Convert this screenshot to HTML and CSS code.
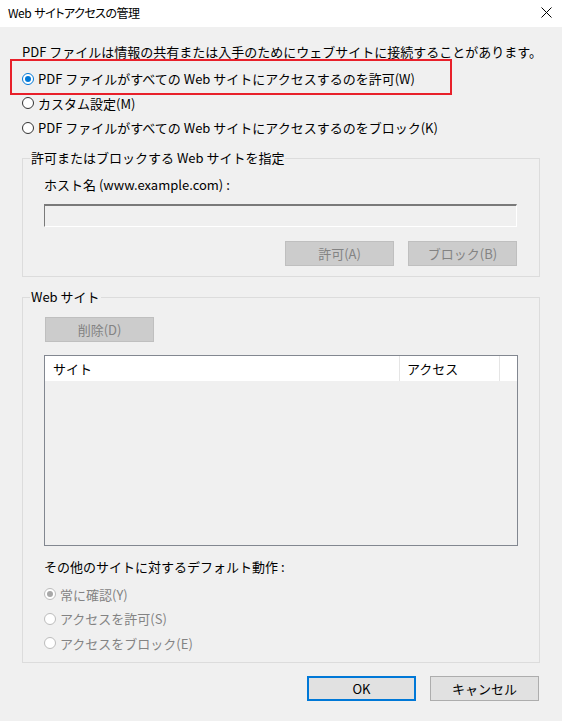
FILE: index.html
```html
<!DOCTYPE html>
<html lang="ja">
<head>
<meta charset="utf-8">
<title>Web サイトアクセスの管理</title>
<link rel="stylesheet" href="styles.css">
</head>
<body>
<div class="dialog">
  <div class="titlebar">
    <span class="title">Web サイトアクセスの管理</span>
    <svg class="close" width="11" height="11" viewBox="0 0 11 11"><path d="M0.5 0.5 L10.5 10.5 M10.5 0.5 L0.5 10.5" stroke="#000" stroke-width="1" fill="none"/></svg>
  </div>
  <div class="main">
    <div class="highlight"></div>
    <p class="intro">PDF ファイルは情報の共有または入手のためにウェブサイトに接続することがあります。</p>
    <div class="options">
      <div class="radio-row"><span class="radio checked"></span><span>PDF ファイルがすべての Web サイトにアクセスするのを許可(W)</span></div>
      <div class="radio-row"><span class="radio"></span><span>カスタム設定(M)</span></div>
      <div class="radio-row"><span class="radio"></span><span>PDF ファイルがすべての Web サイトにアクセスするのをブロック(K)</span></div>
    </div>

    <div class="group group-host">
      <span class="legend">許可またはブロックする Web サイトを指定</span>
      <div class="label">ホスト名 (www.example.com) :</div>
      <div class="textbox"></div>
      <div class="btn-row">
        <span class="btn disabled">許可(A)</span>
        <span class="btn disabled">ブロック(B)</span>
      </div>
    </div>

    <div class="group group-sites">
      <span class="legend">Web サイト</span>
      <span class="btn disabled btn-delete">削除(D)</span>
      <div class="list">
        <div class="list-head">
          <span class="col col-site">サイト</span>
          <span class="col col-access">アクセス</span>
          <span class="col col-rest"></span>
        </div>
      </div>
      <div class="label label-default">その他のサイトに対するデフォルト動作 :</div>
      <div class="default-options">
        <div class="radio-row disabled-row"><span class="radio checked-disabled"></span><span>常に確認(Y)</span></div>
        <div class="radio-row disabled-row"><span class="radio radio-disabled"></span><span>アクセスを許可(S)</span></div>
        <div class="radio-row disabled-row"><span class="radio radio-disabled"></span><span>アクセスをブロック(E)</span></div>
      </div>
    </div>

    <div class="footer">
      <span class="btn btn-ok">OK</span>
      <span class="btn btn-cancel">キャンセル</span>
    </div>
  </div>
</div>
</body>
</html>
```

FILE: styles.css
```css
* { box-sizing: border-box; }
html, body { margin: 0; padding: 0; }
body {
  background: #f0f0f0;
  font-family: "Noto Sans CJK JP", "Noto Sans", sans-serif;
  font-size: 12px;
  color: #000;
}
.dialog {
  width: 562px;
  height: 721px;
  background: #f0f0f0;
  overflow: hidden;
}
.titlebar {
  height: 27px;
  background: #fff;
  display: flex;
  align-items: center;
  justify-content: space-between;
  padding: 0 10px 0 8px;
}
.title {
  font-size: 12px;
  font-feature-settings: "palt";
  letter-spacing: -0.5px;
  word-spacing: 1px;
  line-height: 16px;
  margin-top: -1px;
  white-space: pre;
}
.close { display: block; margin-top: -2px; }

.main {
  position: relative;
  padding: 17px 22px 0 22px;
}
.highlight {
  position: absolute;
  left: 10px;
  top: 32px;
  width: 442px;
  height: 36px;
  border: 2px solid #e8202a;
  pointer-events: none;
}
.intro {
  margin: 0;
  line-height: 16px;
  font-size: 13px;
  white-space: nowrap;
}
.options { margin-top: 6.5px; }
.radio-row {
  height: 24.5px;
  display: flex;
  align-items: center;
  gap: 4px;
  font-size: 13px;
  white-space: nowrap;
}
.radio {
  width: 12px;
  height: 12px;
  border: 1px solid #333;
  border-radius: 50%;
  background: #fff;
  flex: none;
  position: relative;
}
.radio.checked { border-color: #0078d7; }
.radio.checked::after {
  content: "";
  position: absolute;
  left: 2px; top: 2px;
  width: 6px; height: 6px;
  border-radius: 50%;
  background: #0078d7;
}
.radio-disabled { border-color: #bcbcbc; }
.checked-disabled { border-color: #bcbcbc; }
.checked-disabled::after {
  content: "";
  position: absolute;
  left: 2px; top: 2px;
  width: 6px; height: 6px;
  border-radius: 50%;
  background: #a8a8a8;
}
.disabled-row { color: #838383; }

.group {
  position: relative;
  border: 1px solid #dcdcdc;
}
.legend {
  position: absolute;
  top: -9px;
  left: 7px;
  padding: 0 1px;
  background: #f0f0f0;
  line-height: 16px;
  font-size: 13px;
  white-space: nowrap;
}
.group-host {
  margin-top: 17.5px;
  padding: 18px 22px 10px 21px;
}
.label {
  line-height: 16px;
  font-size: 13px;
  white-space: nowrap;
}
.textbox {
  margin-top: 11px;
  height: 23px;
  background: #f0f0f0;
  border-top: 2px solid #7a7a7a;
  border-left: 1px solid #7a7a7a;
  border-right: 1px solid #fff;
  border-bottom: 1px solid #fff;
}
.btn-row {
  margin-top: 14px;
  display: flex;
  justify-content: flex-end;
  gap: 14px;
}
.btn {
  display: flex;
  align-items: center;
  justify-content: center;
  width: 109px;
  height: 25px;
  font-size: 13px;
  background: #e1e1e1;
  border: 1px solid #adadad;
  white-space: nowrap;
}
.btn.disabled {
  background: #cccccc;
  border-color: #bfbfbf;
  color: #838383;
}
.group-sites {
  margin-top: 20px;
  padding: 19px 21px 6.5px 21px;
}
.btn-delete { margin-left: 1px; }
.list {
  margin-top: 13px;
  height: 191px;
  width: 474px;
  border: 1px solid #828790;
  background: #f0f0f0;
}
.list-head {
  display: flex;
  height: 25px;
  background: #fff;
}
.col {
  display: flex;
  align-items: center;
  font-size: 13px;
  white-space: nowrap;
}
.col-site {
  width: 355px;
  padding-left: 8px;
  border-right: 1px solid #e5e5e5;
}
.col-access {
  width: 100px;
  padding-left: 7px;
  border-right: 1px solid #e5e5e5;
}
.col-rest { flex: 1; }
.label-default { margin-top: 13px; }
.default-options { margin-top: 7.5px; }

.footer {
  margin-top: 13px;
  display: flex;
  justify-content: flex-end;
  gap: 14px;
  padding-right: 1px;
}
.btn-ok { border: 2px solid #0078d7; }
```
